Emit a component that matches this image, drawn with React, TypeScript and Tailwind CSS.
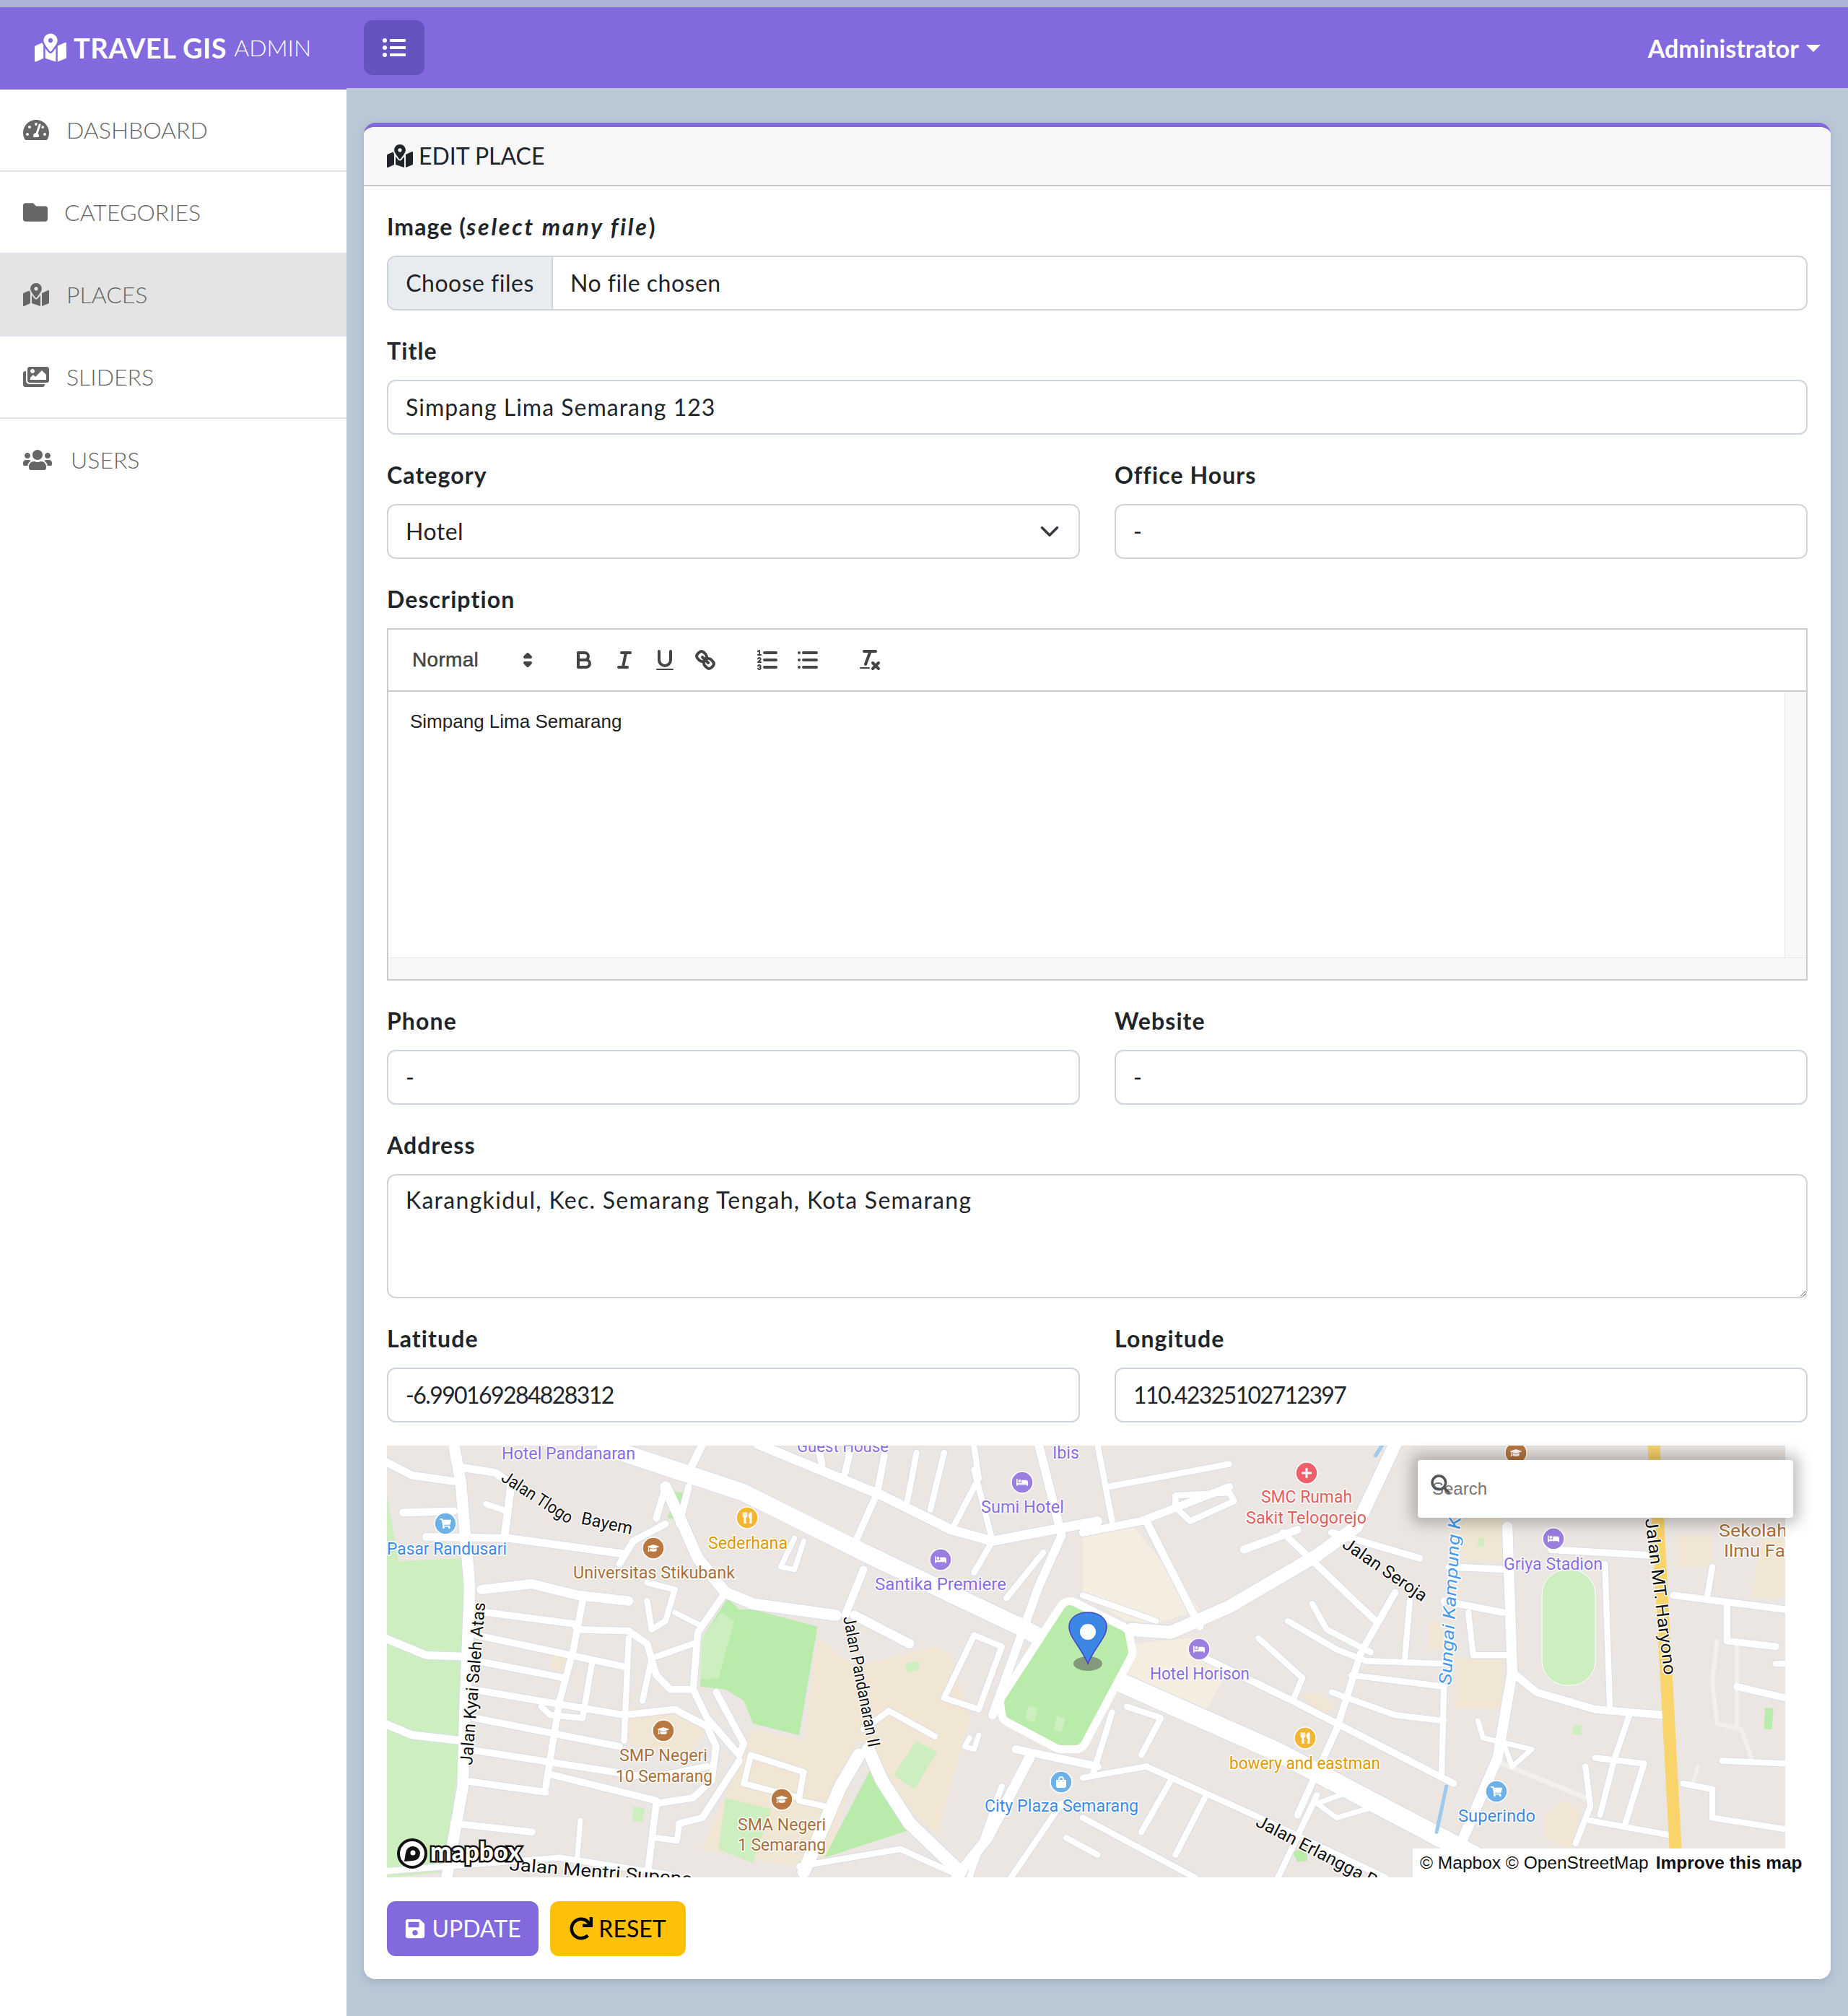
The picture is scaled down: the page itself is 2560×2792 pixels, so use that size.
import React from 'react';
import {
  FaBed,
  FaFolder,
  FaGraduationCap,
  FaImages,
  FaListUl,
  FaMapMarkedAlt,
  FaPlus,
  FaRedo,
  FaSave,
  FaShoppingBag,
  FaShoppingCart,
  FaTachometerAlt,
  FaUsers,
  FaUtensils,
} from 'react-icons/fa';

const sans = 'font-["Lato","Open_Sans",sans-serif]';

type Pts = number[];

// zoomed crop coords -> page coords
const left = (p: Pts) => {
  let d = '';
  for (let i = 0; i < p.length; i += 2) d += `${i ? 'L' : 'M'}${520 + p[i] * 0.638} ${2000 + p[i + 1] * 0.395}`;
  return d;
};
const right = (p: Pts) => {
  let d = '';
  for (let i = 0; i < p.length; i += 2) d += `${i ? 'L' : 'M'}${1500 + p[i] * 0.676} ${2000 + p[i + 1] * 0.395}`;
  return d;
};

const leftRoads: [number, Pts][] = [
  [20, [500, 10, 800, 170, 1060, 380, 1400, 640, 1470, 700]],
  [13, [170, 0, 185, 130, 205, 500, 195, 900, 190, 1200, 155, 1520]],
  [9, [20, 60, 80, 110, 170, 130]],
  [9, [180, 80, 260, 100, 295, 140, 280, 330]],
  [7, [240, 210, 285, 235]],
  [9, [110, 325, 290, 330, 540, 385]],
  [9, [60, 240, 170, 235]],
  [9, [20, 680, 110, 740, 200, 745]],
  [9, [20, 980, 80, 1020, 190, 1040]],
  [11, [230, 510, 340, 490, 440, 530, 550, 550]],
  [8, [240, 590, 430, 630, 440, 650, 550, 655, 590, 700, 610, 810, 640, 860, 690, 860]],
  [8, [220, 670, 540, 780]],
  [8, [220, 760, 410, 820]],
  [8, [210, 860, 540, 950, 650, 930, 720, 990, 740, 1060, 730, 1180, 690, 1240, 610, 1260]],
  [8, [215, 960, 530, 1060]],
  [8, [200, 1070, 600, 1170, 720, 1130]],
  [8, [190, 1180, 370, 1220]],
  [8, [385, 1160, 610, 1250]],
  [8, [450, 550, 430, 720, 400, 900, 370, 1200]],
  [7, [470, 770, 450, 960, 380, 950, 360, 920]],
  [7, [550, 680, 540, 1040]],
  [7, [600, 750, 580, 900]],
  [7, [690, 700, 610, 745]],
  [8, [760, 520, 700, 660, 690, 860, 720, 960, 790, 1090, 800, 1050, 740, 870]],
  [13, [1000, 600, 820, 560, 760, 520, 700, 400, 670, 290, 630, 150]],
  [8, [630, 280, 560, 340, 530, 420]],
  [8, [610, 260, 630, 150]],
  [8, [680, 150, 660, 280]],
  [11, [830, 0, 1100, 180, 1250, 300, 1340, 340, 1568, 270]],
  [9, [710, 0, 680, 100]],
  [8, [960, 0, 970, 70]],
  [8, [1030, 30, 1020, 100]],
  [8, [1105, 40, 1090, 170, 1040, 350]],
  [7, [1175, 30, 1155, 200]],
  [7, [1235, 30, 1205, 230]],
  [7, [1300, 10, 1310, 120, 1255, 290]],
  [9, [1060, 440, 1020, 600]],
  [11, [1040, 600, 1160, 700]],
  [7, [1300, 90, 1340, 340, 1300, 450]],
  [10, [1440, 0, 1490, 320, 1440, 500, 1340, 950]],
  [7, [1450, 380, 1370, 540]],
  [6, [910, 330, 880, 430, 910, 440, 930, 340]],
  [15, [1050, 1090, 1010, 1200, 930, 1500]],
  [15, [1070, 1070, 1100, 1180, 1160, 1330, 1270, 1500]],
  [7, [1300, 670, 1360, 710, 1310, 930, 1235, 890, 1300, 670]],
  [7, [1115, 935, 1215, 1025]],
  [7, [1115, 935, 1060, 1000]],
  [7, [815, 1090, 930, 1150, 920, 1240, 800, 1190, 815, 1090]],
  [7, [920, 1250, 990, 1275]],
  [7, [590, 550, 600, 650, 630, 620, 650, 510, 590, 485]],
  [6, [650, 590, 710, 640]],
  [8, [610, 1260, 590, 1520]],
  [8, [170, 1330, 340, 1360]],
  [6, [445, 1320, 435, 1520]],
  [8, [660, 1330, 710, 1310, 790, 1110]],
  [7, [660, 1330, 655, 1390, 610, 1380]],
  [7, [0, 1500, 240, 1470, 400, 1450, 640, 1510]],
  [7, [1360, 1200, 1290, 1520]],
  [7, [1490, 1260, 1380, 1520]],
  [9, [1390, 1070, 1568, 1130]],
  [12, [1420, 1100, 1330, 1380, 1260, 1520]],
  [7, [1500, 1380, 1568, 1440]],
  [7, [920, 1480, 1140, 1420, 1250, 1500]],
  [6, [1290, 1030, 1280, 1060, 1300, 1070, 1310, 1020]],
];

const rightRoads: [number, Pts][] = [
  [22, [70, 830, 400, 1080, 800, 1440]],
  [15, [100, 650, 180, 660, 300, 570, 480, 390, 560, 290, 640, 0]],
  [9, [0, 310, 120, 270, 300, 150]],
  [7, [30, 0, 60, 270]],
  [7, [50, 150, 300, 70]],
  [7, [190, 180, 300, 170, 310, 200, 220, 270, 190, 220, 190, 180]],
  [9, [130, 270, 240, 640]],
  [7, [0, 530, 150, 620]],
  [9, [330, 370, 440, 300]],
  [8, [250, 750, 430, 900, 760, 1190]],
  [8, [410, 310, 600, 620]],
  [8, [510, 310, 690, 400]],
  [8, [640, 520, 570, 730, 520, 1000, 440, 1300]],
  [7, [360, 680, 450, 820, 430, 900]],
  [7, [420, 620, 520, 720, 580, 760, 740, 770]],
  [7, [470, 560, 500, 650, 590, 730]],
  [7, [550, 810, 740, 850]],
  [7, [510, 870, 640, 950, 740, 970]],
  [7, [670, 550, 660, 750]],
  [8, [740, 550, 860, 590]],
  [8, [750, 430, 870, 440]],
  [7, [790, 590, 800, 740, 870, 740]],
  [7, [740, 850, 735, 1170]],
  [12, [870, 290, 880, 800, 850, 1100, 770, 1420]],
  [9, [880, 800, 930, 870, 1050, 930, 1190, 950]],
  [7, [1070, 420, 1080, 920]],
  [8, [960, 370, 1165, 390]],
  [8, [1210, 530, 1440, 580]],
  [8, [1320, 560, 1320, 690, 1420, 710]],
  [7, [1290, 430, 1280, 530]],
  [7, [1120, 950, 1090, 1100, 1060, 1300]],
  [7, [1050, 1100, 1150, 1120, 1110, 1340]],
  [7, [1230, 1190, 1290, 1210, 1290, 1310, 1440, 1350]],
  [7, [1310, 1110, 1440, 1120]],
  [7, [1010, 1400, 1040, 1270, 1030, 1130]],
  [7, [1040, 1320, 1200, 1370]],
  [8, [1340, 850, 1440, 890]],
  [7, [130, 1130, 350, 1300, 620, 1520]],
  [7, [180, 1180, 120, 1360]],
  [7, [250, 1240, 190, 1440]],
  [7, [90, 920, 160, 960, 120, 1090]],
  [7, [60, 940, 20, 1160]],
  [7, [0, 1170, 130, 1130]],
  [7, [0, 1310, 230, 1520]],
  [7, [480, 1230, 400, 1520]],
  [6, [480, 1260, 560, 1210, 620, 1260, 520, 1310, 480, 1260]],
  [6, [810, 970, 820, 1030, 920, 1070, 880, 1130, 860, 1040]],
  [7, [1440, 770, 1420, 770]],
];

const paleRoads: [number, Pts][] = [
  [6, [1300, 690, 1290, 830, 1300, 980, 1350, 1000, 1370, 1100]],
  [6, [1340, 700, 1340, 850, 1340, 990]],
  [7, [860, 1120, 1030, 1240]],
  [5, [1260, 1130, 1250, 1190]],
];

const lands: [string, Pts][] = [
  ['#cdeebf', [25, 180, 25, 1520, 150, 1500, 190, 1000, 190, 400, 50, 410]],
  ['#b9ebaa', [765, 540, 710, 680, 705, 850, 760, 860, 800, 900, 820, 980, 920, 1020, 960, 640, 820, 580, 790, 580]],
  ['#cdeebf', [750, 590, 780, 620, 745, 820, 705, 825, 710, 680]],
  ['#f1e6d4', [960, 680, 930, 1040, 1060, 1040, 1290, 960, 1250, 740, 1220, 710, 1040, 780]],
  ['#f1e6d4', [1060, 1040, 1100, 1180, 1220, 1370, 1290, 960]],
  ['#f1e6d4', [820, 1000, 710, 1420, 900, 1480, 980, 1480, 1050, 1090, 1040, 1040, 930, 1040]],
  ['#f1e6d4', [545, 920, 700, 960, 720, 1000, 680, 1090, 545, 1050]],
  ['#b9ebaa', [1075, 1140, 975, 1450, 1165, 1350]],
  ['#cdeebf', [1175, 1040, 1220, 1080, 1170, 1210, 1125, 1160]],
  ['#cdeebf', [760, 1240, 860, 1280, 820, 1470, 745, 1420]],
  ['#b9ebaa', [650, 165, 680, 175, 665, 265, 635, 260]],
  ['#cdeebf', [1150, 770, 1180, 760, 1180, 790, 1155, 800]],
  ['#cdeebf', [560, 1270, 585, 1275, 580, 1325, 558, 1320]],
  ['#f1e6d4', [385, 740, 415, 745, 410, 800, 380, 790]],
];

const rightLands: [string, Pts][] = [
  ['#f3eee0', [0, 290, 100, 280, 240, 580, 150, 630, 90, 620, 0, 530]],
  ['#f3eee0', [100, 700, 220, 680, 290, 820, 250, 940, 90, 810]],
  ['#f1e6d4', [765, 750, 860, 750, 860, 925, 765, 925]],
  ['#f1e6d4', [710, 620, 740, 620, 740, 720, 710, 720]],
  ['#f1e6d4', [450, 880, 480, 870, 515, 920, 490, 950]],
  ['#f1e6d4', [945, 1300, 985, 1250, 1020, 1290, 1000, 1420, 945, 1380]],
  ['#f1e6d4', [770, 260, 860, 260, 860, 410, 780, 410]],
  ['#f1e6d4', [1220, 320, 1290, 320, 1290, 430, 1220, 430]],
  ['#f1e6d4', [1390, 330, 1440, 330, 1440, 540, 1370, 540]],
  ['#cdeebf', [1005, 985, 1022, 985, 1022, 1020, 1003, 1018]],
  ['#b9ebaa', [1398, 925, 1415, 925, 1412, 1000, 1396, 1000]],
  ['#b9ebaa', [430, 1430, 460, 1410, 460, 1460, 440, 1465]],
  ['#cdeebf', [810, 328, 822, 328, 822, 360, 810, 360]],
];

const labels: [string, number, number, number, string, number][] = [
  ['Hotel Pandanaran', 695, 2021, 185, '#8a6de4', 24],
  ['Guest House', 1104, 2011, 127, '#8a6de4', 24],
  ['Ibis', 1458, 2020, 37, '#8a6de4', 24],
  ['Sumi Hotel', 1359, 2095, 115, '#8a6de4', 24],
  ['Santika Premiere', 1212, 2202, 182, '#8a6de4', 24],
  ['Griya Stadion', 2083, 2174, 137, '#8a6de4', 24],
  ['Hotel Horison', 1593, 2326, 138, '#8a6de4', 24],
  ['Pasar Randusari', 536, 2153, 166, '#3d8be8', 24],
  ['City Plaza Semarang', 1364, 2509, 213, '#3d8be8', 24],
  ['Superindo', 2020, 2523, 107, '#3d8be8', 24],
  ['Sederhana', 981, 2145, 110, '#e09a00', 24],
  ['bowery and eastman', 1703, 2450, 209, '#e09a00', 24],
  ['Universitas Stikubank', 794, 2186, 224, '#a8703a', 24],
  ['SMP Negeri', 858, 2439, 122, '#a8703a', 24],
  ['10 Semarang', 853, 2468, 134, '#a8703a', 24],
  ['SMA Negeri', 1022, 2535, 122, '#a8703a', 24],
  ['1 Semarang', 1022, 2563, 122, '#a8703a', 24],
  ['Sekolah Tinggi', 2381, 2128, 175, '#a8703a', 24],
  ['Ilmu Farmasi', 2388, 2156, 150, '#a8703a', 24],
  ['SMC Rumah', 1747, 2081, 126, '#e55e5e', 24],
  ['Sakit Telogorejo', 1726, 2110, 167, '#e55e5e', 24],
];

// text, x, y, angle, length, colour
const roadLabels: [string, number, number, number, number, string][] = [
  ['Jalan Tlogo', 693, 2050, 33, 112, '#111'],
  ['Bayem', 804, 2110, 12, 72, '#111'],
  ['Jalan Kyai Saleh Atas', 654, 2445, -85.4, 226, '#111'],
  ['Jalan Pandanaran II', 1168, 2240, 79, 184, '#111'],
  ['Jalan Mentri Supeno', 705, 2590, 4.7, 255, '#111'],
  ['Jalan Seroja', 1858, 2142, 34.4, 136, '#111'],
  ['Sungai Kampung Kali', 2010, 2334, -86.7, 262, '#4a9be8'],
  ['Jalan MT. Haryono', 2279, 2104, 83, 218, '#111'],
  ['Jalan Erlangga Raya', 1738, 2528, 27.4, 224, '#111'],
];

const pois: [number, number, string, typeof FaBed][] = [
  [617, 2110, '#6cb1e8', FaShoppingCart],
  [1035, 2102, '#f4b530', FaUtensils],
  [905, 2144, '#b9783f', FaGraduationCap],
  [1416, 2053, '#9a7ee0', FaBed],
  [1303, 2160, '#9a7ee0', FaBed],
  [919, 2397, '#b9783f', FaGraduationCap],
  [1083, 2492, '#b9783f', FaGraduationCap],
  [1470, 2468, '#6cb1e8', FaShoppingBag],
  [1810, 2040, '#ee5f6b', FaPlus],
  [2152, 2131, '#9a7ee0', FaBed],
  [1661, 2284, '#9a7ee0', FaBed],
  [1808, 2407, '#f4b530', FaUtensils],
  [2073, 2481, '#6cb1e8', FaShoppingCart],
  [2100, 2012, '#b9783f', FaGraduationCap],
];

const squarePath = 'M1482 2232 L1550 2266 L1554 2288 L1490 2408 L1470 2408 L1402 2372 L1400 2358 Z';

function MapCanvas() {
  return (
    <svg
      viewBox="536 2002 1937 598"
      className="block w-[1937px] h-[598px]"
      style={{ fontFamily: 'Roboto, sans-serif' }}
    >
      <rect x="536" y="2002" width="1937" height="598" fill="#ebe6e2" />
      {lands.map(([fill, p], i) => (
        <path key={i} d={left(p) + 'Z'} fill={fill} />
      ))}
      {rightLands.map(([fill, p], i) => (
        <path key={i} d={right(p) + 'Z'} fill={fill} />
      ))}
      <rect x="2136" y="2174" width="74" height="160" rx="34" fill="#cdeebf" stroke="#fff" strokeWidth="1" />
      <g fill="none" strokeLinecap="round" strokeLinejoin="round">
        {leftRoads.map(([w, p], i) => (
          <path key={i} d={left(p)} stroke="#d8dde8" strokeWidth={w * 1.2 + 2} />
        ))}
        {rightRoads.map(([w, p], i) => (
          <path key={i} d={right(p)} stroke="#d8dde8" strokeWidth={w * 1.2 + 2} />
        ))}
        {paleRoads.map(([w, p], i) => (
          <path key={i} d={right(p)} stroke="#f2f0ea" strokeWidth={w} />
        ))}
        {leftRoads.map(([w, p], i) => (
          <path key={i} d={left(p)} stroke="#fff" strokeWidth={w * 1.2} />
        ))}
        {rightRoads.map(([w, p], i) => (
          <path key={i} d={right(p)} stroke="#fff" strokeWidth={w * 1.2} />
        ))}
        <path d={right([1170, 0, 1215, 1430])} stroke="#f9d46a" strokeWidth="17" strokeLinecap="butt" />
        <path d={right([745, 1200, 725, 1360])} stroke="#9cc9ee" strokeWidth="5" />
        <path d={right([615, 0, 600, 40])} stroke="#9cc9ee" strokeWidth="5" />
      </g>
      {/* simpang lima square */}
      <path d={squarePath} fill="#fff" stroke="#fff" strokeWidth="40" strokeLinejoin="round" />
      <path d={squarePath} fill="#b9ebaa" stroke="#b9ebaa" strokeWidth="18" strokeLinejoin="round" />
      <path d="M1425 2362 L1438 2366 L1432 2386 L1420 2380 Z M1464 2376 L1476 2380 L1470 2400 L1460 2396 Z" fill="#cdeebf" />
      {pois.map(([x, y, fill, Icon], i) => (
        <g key={i}>
          <circle cx={x} cy={y} r="15" fill={fill} stroke="#fff" strokeWidth="1.5" />
          <Icon x={x - 8} y={y - 8} width="16" height="16" fill="#fff" color="#fff" />
        </g>
      ))}
      <g fontSize="24" stroke="#fff" strokeWidth="3" strokeLinejoin="round" style={{ paintOrder: 'stroke' }}>
        {labels.map(([text, x, y, w, fill, size]) => (
          <text key={text} x={x} y={y} fill={fill} fontSize={size} textLength={w} lengthAdjust="spacingAndGlyphs">
            {text}
          </text>
        ))}
        {roadLabels.map(([text, x, y, angle, w, fill]) => (
          <text
            key={text}
            transform={`translate(${x} ${y}) rotate(${angle})`}
            fill={fill}
            fontStyle={text.startsWith('Sungai') ? 'italic' : 'normal'}
            textLength={w}
            lengthAdjust="spacingAndGlyphs"
          >
            {text}
          </text>
        ))}
      </g>
      {/* marker */}
      <ellipse cx="1507" cy="2304" rx="20" ry="10" fill="#555" opacity="0.55" />
      <path
        d="M1507 2304 C1497 2280 1481 2268 1481 2253 C1481 2241 1492 2233 1507 2233 C1522 2233 1533 2241 1533 2253 C1533 2268 1517 2280 1507 2304 Z"
        fill="#3c87e6"
        stroke="#4a3fc0"
        strokeWidth="1.5"
      />
      <circle cx="1507" cy="2260" r="11" fill="#fff" />
      {/* mapbox logo */}
      <circle cx="571" cy="2567" r="19" fill="#fff" stroke="#111" strokeWidth="4" />
      <path d="M560 2578 L562 2566 A10 10 0 1 1 572 2577 Z" fill="#111" />
      <circle cx="572" cy="2566" r="3.5" fill="#fff" />
      <text
        x="596"
        y="2577"
        fontFamily="Lato, sans-serif"
        fontSize="36"
        fontWeight="900"
        fill="#fff"
        stroke="#111"
        strokeWidth="5"
        textLength="126"
        lengthAdjust="spacingAndGlyphs"
        style={{ paintOrder: 'stroke' }}
      >
        mapbox
      </text>
    </svg>
  );
}

function QuillIcon({ children }: { children: React.ReactNode }) {
  return (
    <span className="flex h-[48px] w-[56px] items-center justify-center">
      <svg viewBox="0 0 18 18" className="h-[36px] w-[36px]" fill="none" stroke="#444" strokeWidth="2" strokeLinecap="round" strokeLinejoin="round">
        {children}
      </svg>
    </span>
  );
}

function Toolbar() {
  return (
    <div className="flex h-[86px] items-center border-b-2 border-[#ccc] pl-[33px]">
      <span className='flex w-[204px] items-center justify-between pr-[26px] font-["Liberation_Sans",sans-serif] text-[28px] font-medium tracking-[0.3px] text-[#444] [-webkit-text-stroke:0.5px_#444]'>
        Normal
        <svg viewBox="0 0 18 18" className="h-[36px] w-[36px]" fill="#444" stroke="#444" strokeWidth="2" strokeLinejoin="round">
          <polygon points="7 11 9 13 11 11 7 11" />
          <polygon points="7 7 9 5 11 7 7 7" />
        </svg>
      </span>
      <span className="ml-[6px] flex">
        <QuillIcon>
          <path d="M5,4H9.5A2.5,2.5,0,0,1,12,6.5v0A2.5,2.5,0,0,1,9.5,9H5A0,0,0,0,1,5,9V4A0,0,0,0,1,5,4Z" />
          <path d="M5,9h5.5A2.5,2.5,0,0,1,13,11.5v0A2.5,2.5,0,0,1,10.5,14H5a0,0,0,0,1,0,0V9A0,0,0,0,1,5,9Z" />
        </QuillIcon>
        <QuillIcon>
          <line x1="7" x2="13" y1="4" y2="4" />
          <line x1="5" x2="11" y1="14" y2="14" />
          <line x1="8" x2="10" y1="14" y2="4" />
        </QuillIcon>
        <QuillIcon>
          <path d="M5,3V9a4.012,4.012,0,0,0,4,4H9a4.012,4.012,0,0,0,4-4V3" />
          <rect x="3" y="15" width="12" height="1" rx="0.5" fill="#444" stroke="none" />
        </QuillIcon>
        <QuillIcon>
          <line x1="7" x2="11" y1="7" y2="11" />
          <path d="M8.9,4.577a3.476,3.476,0,0,1,.36,4.679A3.476,3.476,0,0,1,4.577,8.9C3.185,7.5,2.035,6.4,4.217,4.217S7.5,3.185,8.9,4.577Z" />
          <path d="M13.423,9.1a3.476,3.476,0,0,0-4.679-.36,3.476,3.476,0,0,0,.36,4.679c1.392,1.392,2.5,2.542,4.679.36S14.815,10.5,13.423,9.1Z" />
        </QuillIcon>
      </span>
      <span className="ml-[30px] flex">
        <QuillIcon>
          <line x1="7" x2="15" y1="4" y2="4" />
          <line x1="7" x2="15" y1="9" y2="9" />
          <line x1="7" x2="15" y1="14" y2="14" />
          <g strokeWidth="1">
            <line x1="2.5" x2="4.5" y1="5.5" y2="5.5" />
            <path d="M3.5,5.5V2.5L2.5,3" />
            <path d="M4.5,10.5h-2c0-.234,1.85-1.076,1.85-2.234A0.959,0.959,0,0,0,2.5,8.156" />
            <path d="M2.5,14.846a0.959,0.959,0,0,0,1.85-.109A0.7,0.7,0,0,0,3.75,14a0.688,0.688,0,0,0,.6-0.736,0.959,0.959,0,0,0-1.85-.109" />
          </g>
        </QuillIcon>
        <QuillIcon>
          <line x1="6" x2="15" y1="4" y2="4" />
          <line x1="6" x2="15" y1="9" y2="9" />
          <line x1="6" x2="15" y1="14" y2="14" />
          <line x1="3" x2="3" y1="4" y2="4" />
          <line x1="3" x2="3" y1="9" y2="9" />
          <line x1="3" x2="3" y1="14" y2="14" />
        </QuillIcon>
      </span>
      <span className="ml-[30px] flex">
        <QuillIcon>
          <line x1="5" x2="13" y1="3" y2="3" />
          <line x1="6" x2="9.35" y1="12" y2="3" />
          <line x1="11" x2="15" y1="11" y2="15" />
          <line x1="15" x2="11" y1="11" y2="15" />
          <rect x="2" y="14" width="7" height="1" rx="0.5" fill="#444" stroke="none" />
        </QuillIcon>
      </span>
    </div>
  );
}

function Label({ children }: { children: React.ReactNode }) {
  return <div className="mb-[20px] h-[40px] text-[32px] font-bold leading-[40px] tracking-[1.1px] text-[#212529]">{children}</div>;
}

function Input({ value, numeric }: { value: string; numeric?: boolean }) {
  return (
    <div
      className={`flex h-[76px] items-center rounded-[12px] border-2 border-[#ced4da] bg-white px-[24px] text-[32px] text-[#212529] ${numeric ? 'tracking-[-1.6px]' : 'tracking-[1px]'}`}
    >
      {value}
    </div>
  );
}

const navItems = [
  { icon: FaTachometerAlt, label: 'DASHBOARD', gap: 'gap-[24px]', size: 'text-[36px]' },
  { icon: FaFolder, label: 'CATEGORIES', gap: 'gap-[23px]', size: 'text-[34px]' },
  { icon: FaMapMarkedAlt, label: 'PLACES', gap: 'gap-[24px]', size: 'text-[36px]', active: true },
  { icon: FaImages, label: 'SLIDERS', gap: 'gap-[24px]', size: 'text-[36px]' },
  { icon: FaUsers, label: 'USERS', gap: 'gap-[26px]', size: 'text-[40px]', last: true },
];

export default function App() {
  return (
    <div className={`flex min-h-[2792px] flex-col bg-[#bac8d6] ${sans}`}>
      <div className="h-[10px] bg-[#aeb4d9]" />
      <header className="flex h-[112px] items-center bg-[#8269de] text-white">
        <div className="flex w-[504px] items-center pl-[48px]">
          <FaMapMarkedAlt className="text-[44px]" />
          <span className="ml-[10px] text-[38px] font-bold tracking-[0.5px]">TRAVEL GIS</span>
          <span className="ml-[10px] text-[32px] font-light">ADMIN</span>
        </div>
        <button className="flex h-[76px] w-[84px] items-center justify-center rounded-[12px] bg-[#6553c0]">
          <FaListUl className="text-[32px]" />
        </button>
        <div className="ml-auto flex items-center pr-[38px] text-[34px] font-bold">
          Administrator
          <span className="ml-[10px] mt-[2px] h-0 w-0 border-x-[10px] border-t-[10px] border-x-transparent border-t-white" />
        </div>
      </header>
      <div className="flex flex-1">
        <aside className="w-[480px] shrink-0 border-t-2 border-[#8269de] bg-white text-[#666]">
          {navItems.map((item) => (
            <div
              key={item.label}
              className={`flex h-[114px] items-center pl-[32px] ${item.gap} ${item.active ? 'bg-[#e4e4e4]' : ''} ${item.last ? '' : 'border-b-2 border-[#e2e2ea]'}`}
            >
              <item.icon className={item.size} />
              <span className="text-[32px] font-light">{item.label}</span>
            </div>
          ))}
        </aside>
        <main className="flex-1 px-[24px] pt-[48px]">
          <div className="overflow-hidden rounded-[16px] border-t-[6px] border-[#8269de] bg-white shadow-[0_4px_12px_rgba(100,120,150,0.3)]">
            <div className="flex h-[82px] items-center gap-[8px] border-b-2 border-[#c8c8c8] bg-[#f7f7f7] px-[32px] text-[32px] font-normal text-[#212529]">
              <FaMapMarkedAlt className="text-[36px]" />
              EDIT PLACE
            </div>
            <form className="px-[32px] pt-[36px] pb-[32px]">
              <Label>
                Image (<em className="tracking-[2.8px]">select many file</em>)
              </Label>
              <div className="flex h-[76px] items-center overflow-hidden rounded-[12px] border-2 border-[#ced4da] text-[32px] tracking-[0.5px] text-[#212529]">
                <span className="flex h-full w-[228px] items-center justify-center border-r-2 border-[#ced4da] bg-[#e9ecef]">Choose files</span>
                <span className="pl-[24px]">No file chosen</span>
              </div>
              <div className="mt-[36px]">
                <Label>Title</Label>
                <Input value="Simpang Lima Semarang 123" />
              </div>
              <div className="mt-[36px] grid grid-cols-2 gap-x-[48px]">
                <div>
                  <Label>Category</Label>
                  <div className="flex h-[76px] items-center justify-between rounded-[12px] border-2 border-[#ced4da] pl-[24px] pr-[26px] text-[32px] tracking-[0.5px] text-[#212529]">
                    Hotel
                    <svg viewBox="0 0 16 16" className="h-[28px] w-[28px]" fill="none" stroke="#343a40" strokeWidth="2" strokeLinecap="round" strokeLinejoin="round">
                      <path d="M2 5l6 6 6-6" />
                    </svg>
                  </div>
                </div>
                <div>
                  <Label>Office Hours</Label>
                  <Input value="-" />
                </div>
              </div>
              <div className="mt-[36px]">
                <Label>Description</Label>
                <div className="h-[488px] border-2 border-[#ccc]">
                  <Toolbar />
                  <div className='flex h-[398px] flex-col font-["Liberation_Sans",sans-serif] text-[26px] text-[#222]'>
                    <div className="flex flex-1">
                      <div className="flex-1 px-[30px] pt-[22px]">Simpang Lima Semarang</div>
                      <div className="w-[30px] border-l border-[#e8e8e8] bg-[#f7f7f7]" />
                    </div>
                    <div className="h-[30px] border-t border-[#e8e8e8] bg-[#f7f7f7]" />
                  </div>
                </div>
              </div>
              <div className="mt-[36px] grid grid-cols-2 gap-x-[48px]">
                <div>
                  <Label>Phone</Label>
                  <Input value="-" />
                </div>
                <div>
                  <Label>Website</Label>
                  <Input value="-" />
                </div>
              </div>
              <div className="mt-[36px]">
                <Label>Address</Label>
                <textarea
                  readOnly
                  value="Karangkidul, Kec. Semarang Tengah, Kota Semarang"
                  className="block h-[172px] w-full rounded-[12px] border-2 border-[#ced4da] px-[24px] py-[10px] text-[32px] tracking-[1.3px] text-[#212529]"
                />
              </div>
              <div className="mt-[36px] grid grid-cols-2 gap-x-[48px]">
                <div>
                  <Label>Latitude</Label>
                  <Input value="-6.990169284828312" numeric />
                </div>
                <div>
                  <Label>Longitude</Label>
                  <Input value="110.42325102712397" numeric />
                </div>
              </div>
              <div className="relative mt-[32px] h-[598px]">
                <MapCanvas />
                <div className="absolute right-[20px] top-[20px] flex h-[80px] w-[520px] items-center rounded-[4px] bg-white shadow-[0_0_20px_8px_rgba(0,0,0,0.25)]">
                  <svg viewBox="0 0 24 24" className="absolute left-[16px] top-[18px] h-[32px] w-[32px]" fill="none" stroke="#555" strokeWidth="2.6">
                    <circle cx="10" cy="10" r="7" />
                    <path d="M15 15l6 6" />
                  </svg>
                  <span className='pl-[20px] font-["Liberation_Sans",sans-serif] text-[24px] text-[#757575]'>Search</span>
                </div>
                <div className='absolute bottom-0 right-0 flex h-[40px] w-[547px] items-center gap-[10px] bg-white pl-[10px] font-["Liberation_Sans",sans-serif] text-[24.5px] text-[#111]'>
                  <span>© Mapbox © OpenStreetMap</span>
                  <span className="font-bold">Improve this map</span>
                </div>
              </div>
              <div className="mt-[33px] flex gap-[16px] text-[32px]">
                <button type="button" className="flex h-[76px] w-[210px] items-center justify-center gap-[8px] rounded-[12px] bg-[#8269de] text-white">
                  <FaSave className="text-[30px]" />
                  UPDATE
                </button>
                <button type="button" className="flex h-[76px] w-[188px] items-center justify-center gap-[8px] rounded-[12px] bg-[#ffc107] text-black">
                  <FaRedo className="text-[32px]" />
                  RESET
                </button>
              </div>
            </form>
          </div>
        </main>
      </div>
    </div>
  );
}
